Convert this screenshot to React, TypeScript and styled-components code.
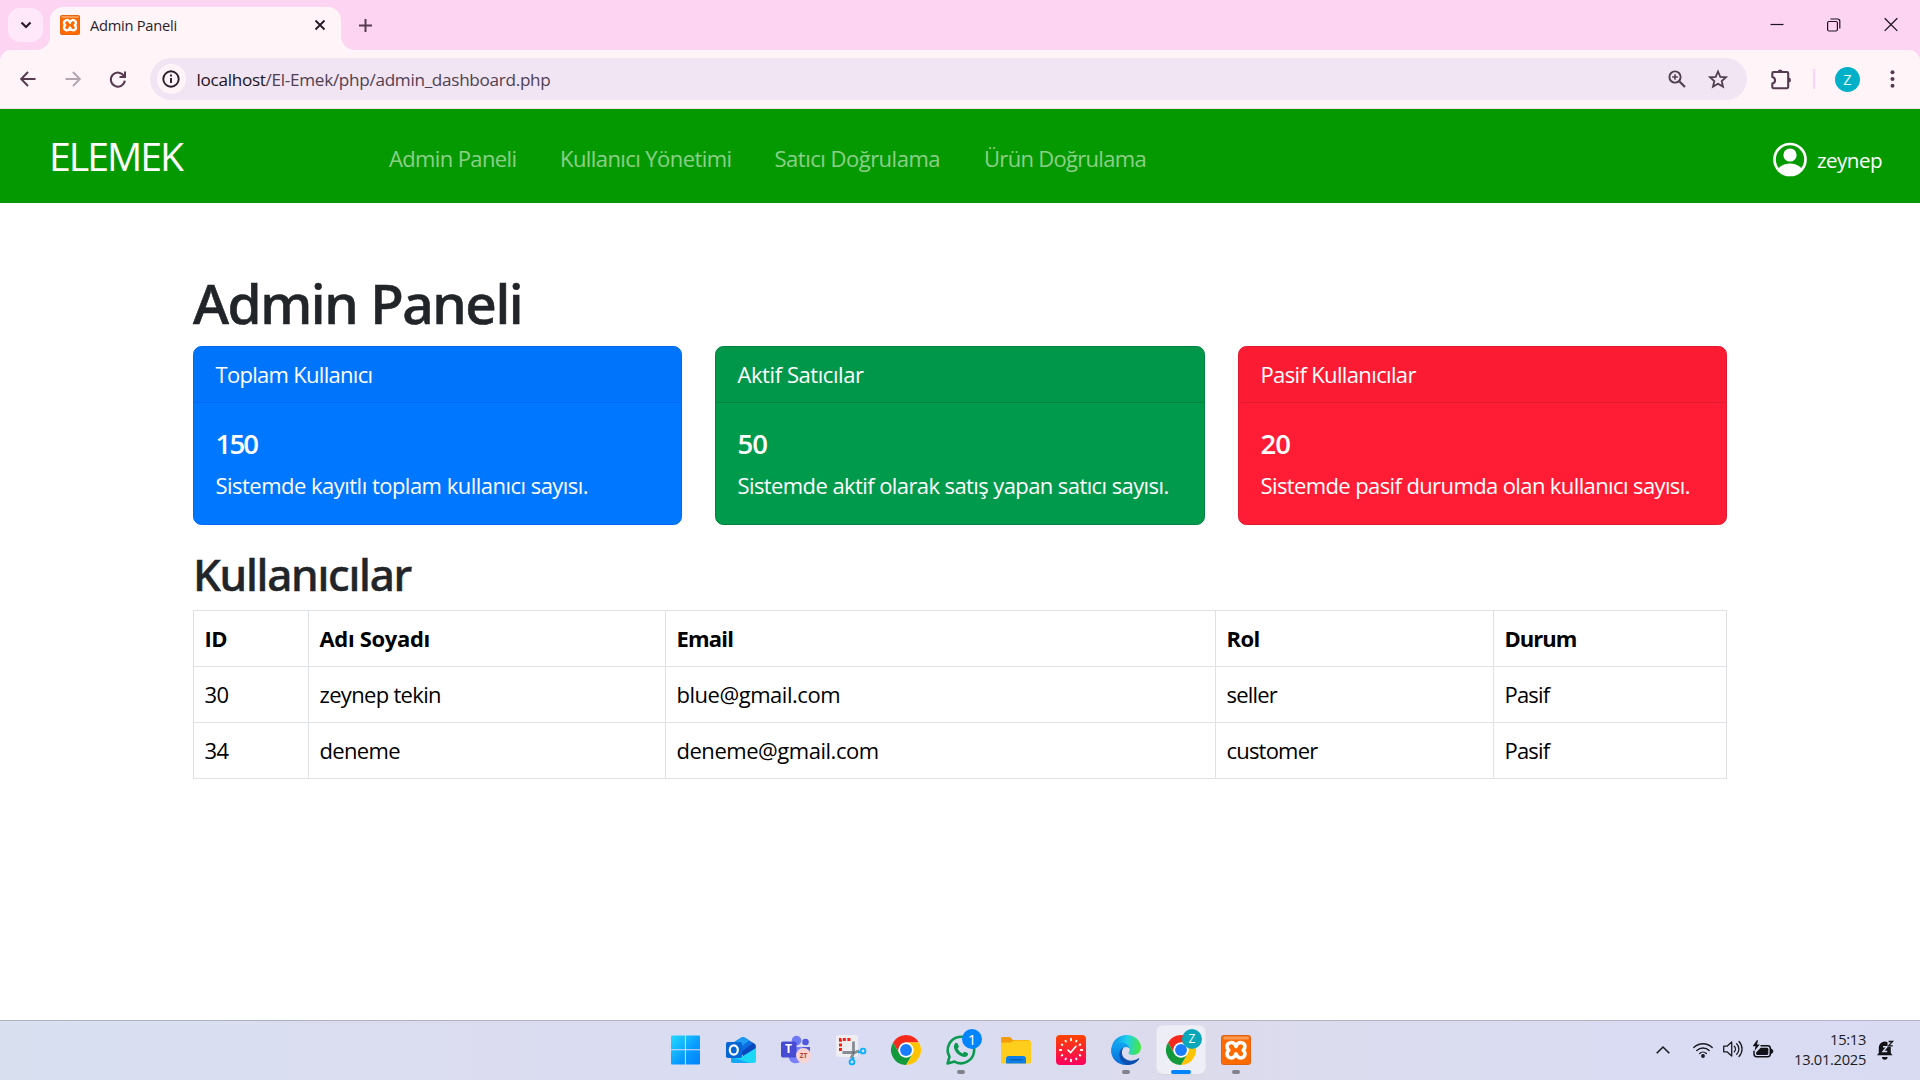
import React from "react";
import styled, { createGlobalStyle } from "styled-components";

const GlobalStyle = createGlobalStyle`
  *, *::before, *::after { box-sizing: border-box; }
  html, body { margin: 0; padding: 0; }
  body { background: #fff; overflow: hidden; font-family: "Open Sans", "Noto Sans", sans-serif; }
  svg { display: block; flex: none; overflow: visible; }
  h1, h2, h5, p { margin: 0; }
`;

const Screen = styled.div`
  width: 1920px;
  height: 1080px;
  display: flex;
  flex-direction: column;
  overflow: hidden;
`;

/* ---------- Browser chrome ---------- */

const TabStrip = styled.div`
  height: 50px;
  flex: none;
  display: flex;
  align-items: center;
  background: #fdd4f2;
  padding-left: 8px;
`;

const TabSearch = styled.div`
  width: 35px;
  height: 34px;
  border-radius: 12px;
  background: #fee8fa;
  display: flex;
  align-items: center;
  justify-content: center;
`;

const Tab = styled.div`
  position: relative;
  align-self: flex-end;
  width: 291px;
  height: 43px;
  margin-left: 7px;
  padding: 0 16px 7px 10px;
  border-radius: 13px 13px 0 0;
  background: #fff5f9;
  display: flex;
  align-items: center;
  &::before,
  &::after {
    content: "";
    position: absolute;
    bottom: 0;
    width: 13px;
    height: 13px;
  }
  &::before {
    left: -13px;
    background: radial-gradient(circle at 0 0, transparent 12.5px, #fff5f9 13px);
  }
  &::after {
    right: -13px;
    background: radial-gradient(circle at 100% 0, transparent 12.5px, #fff5f9 13px);
  }
`;

const TabTitle = styled.span`
  flex: 1;
  margin-left: 10px;
  font-size: 14.7px;
  letter-spacing: -0.27px;
  color: #2b1d29;
`;

const NewTab = styled.div`
  margin-left: 18px;
`;

const WindowButtons = styled.div`
  display: flex;
  align-items: center;
  gap: 43px;
  margin-left: auto;
  padding-right: 22px;
`;

const ToolbarBack = styled.div`
  flex: none;
  background: #fdd4f2;
`;

const Toolbar = styled.div`
  height: 59px;
  display: flex;
  align-items: center;
  background: #fff5f9;
  border-bottom: 1px solid #efdfee;
  border-radius: 11px 11px 0 0;
  padding: 0 20px;
`;

const NavButtons = styled.div`
  display: flex;
  align-items: center;
  gap: 29px;
  width: 130px;
`;

const Omnibox = styled.div`
  width: 1597px;
  height: 42px;
  border-radius: 21px;
  background: #f1e4f3;
  display: flex;
  align-items: center;
  padding: 0 19px 0 6.5px;
`;

const SiteInfo = styled.div`
  width: 29px;
  height: 30px;
  border-radius: 50%;
  background: #fff5f9;
  display: flex;
  align-items: center;
  justify-content: center;
`;

const Url = styled.span`
  flex: 1;
  margin-left: 11px;
  font-size: 17.15px;
  letter-spacing: -0.3px;
  color: #4f3f50;
`;

const Host = styled.span`
  color: #1d1320;
`;

const OmniActions = styled.div`
  display: flex;
  align-items: center;
  gap: 22px;
`;

const ToolbarActions = styled.div`
  display: flex;
  align-items: center;
  margin-left: 24px;
`;

const Divider = styled.div`
  width: 2px;
  height: 20px;
  margin: 0 20px 0 21px;
  background: #fcd3f6;
`;

const ProfileBadge = styled.div`
  width: 25px;
  height: 25px;
  margin-right: 30px;
  border-radius: 50%;
  background: #00b0c8;
  color: #e9fbff;
  font-size: 14.5px;
  line-height: 25px;
  text-align: center;
`;

/* ---------- Page ---------- */

const Page = styled.div`
  flex: 1;
  min-height: 0;
  background: #fff;
`;

const Navbar = styled.nav`
  height: 94px;
  display: flex;
  align-items: center;
  background: #059900;
  padding: 0 38px 0 49px;
`;

const Brand = styled.div`
  width: 340px;
  padding-bottom: 1px;
  font-size: 39.2px;
  letter-spacing: -2px;
  color: #fff;
`;

const NavList = styled.div`
  flex: 1;
  display: flex;
  padding-top: 3px;
`;

const NavLink = styled.a<{ $width: number; $track: number }>`
  width: ${(p) => p.$width}px;
  font-size: 22px;
  letter-spacing: ${(p) => p.$track}px;
  white-space: nowrap;
  color: rgba(255, 255, 255, 0.55);
`;

const UserMenu = styled.div`
  display: flex;
  align-items: center;
  gap: 10px;
  padding-top: 7px;
  font-size: 20.6px;
  letter-spacing: -0.55px;
  color: #fff;
`;

const Main = styled.main`
  width: 1534px;
  margin: 0 auto;
  padding-top: 66px;
`;

const PageTitle = styled.h1`
  font: 500 55px/67px "Noto Sans", sans-serif;
  letter-spacing: -1.45px;
  -webkit-text-stroke: 0.6px #212529;
  color: #212529;
  margin-bottom: 10px;
`;

const CardRow = styled.div`
  display: grid;
  grid-template-columns: 489px 490px 489px;
  justify-content: space-between;
`;

const Card = styled.section<{ $bg: string; $line: string }>`
  height: 179px;
  border: 1px solid ${(p) => p.$line};
  border-radius: 8.4px;
  background: ${(p) => p.$bg};
  color: #fff;
  overflow: hidden;
  --line: ${(p) => p.$line};
`;

const CardHeader = styled.div<{ $track: number }>`
  padding: 11px 22px 11px 21.5px;
  border-bottom: 1px solid var(--line);
  background: rgba(0, 0, 0, 0.015);
  font-size: 22px;
  line-height: 33px;
  letter-spacing: ${(p) => p.$track}px;
`;

const CardBody = styled.div`
  padding: 22px 22px 22px 21.5px;
`;

const CardFigure = styled.h5<{ $track: number }>`
  font-size: 27.5px;
  font-weight: 600;
  line-height: 35px;
  letter-spacing: ${(p) => p.$track}px;
  padding-top: 0.5px;
  margin-bottom: 8.5px;
`;

const CardText = styled.p<{ $track: number }>`
  font-size: 22px;
  line-height: 33px;
  letter-spacing: ${(p) => p.$track}px;
  white-space: nowrap;
`;

const SectionTitle = styled.h2`
  font: 500 44px/54px "Noto Sans", sans-serif;
  letter-spacing: -1.25px;
  -webkit-text-stroke: 0.5px #212529;
  color: #212529;
  margin: 22px 0 9px;
`;

const Table = styled.table`
  width: 1533px;
  table-layout: fixed;
  border-collapse: collapse;
  font-size: 22px;
  line-height: 33px;
  color: #000;
`;

const Col = styled.col<{ $width: number }>`
  width: ${(p) => p.$width}px;
`;

const Row = styled.tr`
  height: 56px;
`;

const HeadCell = styled.th<{ $track: number }>`
  border: 1px solid #dee2e6;
  padding: 11px 11px 11px 10.5px;
  text-align: left;
  font-weight: 700;
  letter-spacing: ${(p) => p.$track}px;
`;

const Cell = styled.td<{ $track: number }>`
  border: 1px solid #dee2e6;
  padding: 11px 11px 11px 10.5px;
  letter-spacing: ${(p) => p.$track}px;
`;

/* ---------- Taskbar ---------- */

const Taskbar = styled.footer`
  height: 60px;
  flex: none;
  display: grid;
  grid-template-columns: 1fr auto 1fr;
  border-top: 1px solid #b1b2c1;
  background: linear-gradient(90deg, #d8e0f0 0%, #dbdcf0 25%, #d9dcf3 45%, #dcdbec 62%, #d9dcf2 85%, #d8dbf1 100%);
`;

const AppList = styled.div`
  grid-column: 2;
  display: flex;
  align-items: center;
  margin-left: 2px;
`;

const AppSlot = styled.div`
  width: 55px;
  display: flex;
  justify-content: center;
`;

const AppTile = styled.div<{ $active?: boolean }>`
  position: relative;
  width: 48px;
  height: 48px;
  margin-bottom: 1px;
  border-radius: 6px;
  display: flex;
  align-items: center;
  justify-content: center;
  background: ${(p) => (p.$active ? "#eeeef6" : "transparent")};
  box-shadow: ${(p) => (p.$active ? "0 0 0 1px rgba(255,255,255,.35), 0 1px 1px rgba(0,0,0,.12)" : "none")};
`;

const Indicator = styled.div<{ $active?: boolean }>`
  position: absolute;
  bottom: 0;
  left: ${(p) => (p.$active ? 14 : 20)}px;
  width: ${(p) => (p.$active ? 20 : 8)}px;
  height: 4px;
  border-radius: 2px;
  background: ${(p) => (p.$active ? "#0085ff" : "#82828c")};
`;

const Badge = styled.div<{ $bg: string; $size: number }>`
  position: absolute;
  top: 3px;
  right: 3px;
  width: 20px;
  height: 20px;
  border-radius: 50%;
  background: ${(p) => p.$bg};
  color: #fff;
  font-size: ${(p) => p.$size}px;
  line-height: 20px;
  text-align: center;
`;

const Tray = styled.div`
  grid-column: 3;
  justify-self: end;
  display: flex;
  align-items: center;
  padding-right: 25px;
`;

const TrayIcons = styled.div`
  display: flex;
  align-items: center;
  gap: 10px;
  margin: 0 0 3px 23px;
`;

const Clock = styled.div`
  width: 93px;
  margin: 0 10px 4px 0;
  text-align: right;
  font-size: 14.7px;
  line-height: 20px;
  letter-spacing: -0.3px;
  color: #1b1b22;
`;

/* ---------- Icons ---------- */

const ink = "#553a50";

const XamppIcon = ({ size = 30 }: { size?: number }) => (
  <svg width={size} height={size} viewBox="0 0 30 30">
    <rect width="30" height="30" rx="3" fill="#e0640f" />
    <rect x="1" y="1" width="28" height="28" rx="2.5" fill="#ff6a00" />
    <rect x="2" y="1.5" width="26" height="3" rx="1.5" fill="#f99a55" />
    <path
      d="M15 11.5C13.8 7.6 11 6.900 8.700 7.900C5.500 9.200 5.200 12.600 7.800 15.200C5.200 17.800 5.500 21.400 8.700 22.600C11 23.500 13.800 22.600 15 18.900C16.200 22.600 19 23.500 21.300 22.600C24.500 21.400 24.800 17.800 22.200 15.200C24.800 12.600 24.500 9.200 21.300 7.900C19 6.900 16.200 7.600 15 11.500Z"
      fill="none"
      stroke="#fff"
      strokeWidth="3.6"
      strokeLinejoin="round"
    />
  </svg>
);

const ChromeIcon = () => (
  <svg width="30" height="30" viewBox="0 0 48 48">
    <circle cx="24" cy="24" r="24" fill="#fff" />
    <path d="M24 12H44.8A24 24 0 0 0 3.2 12L13.6 30A12 12 0 0 1 24 12Z" fill="#f52a1d" />
    <path d="M34.4 30L24 48A24 24 0 0 0 44.8 12H24A12 12 0 0 1 34.4 30Z" fill="#ffc400" />
    <path d="M13.6 30L3.2 12A24 24 0 0 0 24 48L34.4 30A12 12 0 0 1 13.6 30Z" fill="#12993c" />
    <circle cx="24" cy="24" r="12" fill="#fff" />
    <circle cx="24" cy="24" r="9.5" fill="#1a7dff" />
  </svg>
);

const WindowsIcon = () => (
  <svg width="30" height="30" viewBox="0 0 30 30">
    <defs>
      <linearGradient id="win" x1="0" y1="0" x2="30" y2="30" gradientUnits="userSpaceOnUse">
        <stop stopColor="#22dcff" />
        <stop offset=".6" stopColor="#0899ff" />
        <stop offset="1" stopColor="#0080f8" />
      </linearGradient>
    </defs>
    <path d="M1 .5H13.900V14.300H0V1.500a1 1 0 0 1 1-1ZM14.900.5H28a1 1 0 0 1 1 1V14.300H14.900ZM0 15.300H13.900V29.500H1a1 1 0 0 1-1-1ZM14.900 15.300H29V28.500a1 1 0 0 1-1 1H14.900Z" fill="url(#win)" />
  </svg>
);

const OutlookIcon = () => (
  <svg width="30" height="30" viewBox="0 0 30 30">
    <path d="M5 9L15.5 2.5a3 3 0 0 1 3 0L29 9v4L17 20H5Z" fill="#0f6be0" />
    <path d="M5 9L15.5 2.5a3 3 0 0 1 3 0l5 3L10 15H5Z" fill="#1e9bf5" />
    <path d="M16 16.500L27 8l2.800 2v5L17 22Z" fill="#0a49bd" />
    <path d="M30 13v12.500a2.500 2.500 0 0 1-2.500 2.500H7.500A2.500 2.500 0 0 1 5 25.500V22l12-1Z" fill="#1dd7f7" />
    <path d="M5 22L24 28H7.500A2.500 2.500 0 0 1 5 25.500Z" fill="#14a8f4" />
    <rect x="0" y="7" width="16" height="16" rx="1.800" fill="#0666d6" />
    <ellipse cx="7.800" cy="15" rx="4" ry="4.600" fill="none" stroke="#fff" strokeWidth="2.200" />
  </svg>
);

const TeamsLetter = styled.span`
  position: absolute;
  left: 9px;
  top: 15px;
  width: 15px;
  height: 16px;
  line-height: 16px;
  font-size: 12px;
  font-weight: 700;
  text-align: center;
  color: #fff;
`;

const TeamsAccount = styled.span`
  position: absolute;
  left: 24px;
  top: 22px;
  width: 15px;
  height: 15px;
  border-radius: 50%;
  background: #f9d3cf;
  line-height: 15px;
  font-size: 6.5px;
  font-weight: 700;
  text-align: center;
  color: #a5473d;
`;

const TeamsIcon = () => (
  <>
    <svg width="30" height="30" viewBox="0 0 30 30">
      <circle cx="15.500" cy="5.600" r="4.800" fill="#7079f5" />
      <circle cx="24.500" cy="7" r="3.300" fill="#5059e0" />
      <path d="M19 12h10v9a6 6 0 0 1-10 4Z" fill="#5158df" />
      <path d="M8 12h13.500v10.500a7 7 0 0 1-13.500 1Z" fill="#7880fb" />
      <rect y="6.500" width="15.500" height="16" rx="1.800" fill="#454bd3" />
    </svg>
    <TeamsLetter>T</TeamsLetter>
    <TeamsAccount>ZT</TeamsAccount>
  </>
);

const SnipIcon = () => (
  <svg width="30" height="30" viewBox="0 0 30 30">
    <rect y="0" width="22" height="22" rx="2" fill="#eeeef0" />
    <path d="M4.500 16V4.500H16" fill="none" stroke="#f51f14" strokeWidth="3" strokeDasharray="3 1.600" />
    <path d="M17.500 6.500V18.500L15 23.500M6.500 17.500H18.500L23 15.800" fill="none" stroke="#868c94" strokeWidth="2.800" />
    <circle cx="17.500" cy="17.500" r="1" fill="#555b62" />
    <circle cx="27" cy="16" r="2.400" fill="none" stroke="#0bb0fa" strokeWidth="1.900" />
    <circle cx="16" cy="27" r="2.400" fill="none" stroke="#0bb0fa" strokeWidth="1.900" />
    <path d="M22 17.400l3-.700M17.600 22l-.800 3" stroke="#0bb0fa" strokeWidth="2" />
  </svg>
);

const WhatsAppIcon = () => (
  <svg width="30" height="30" viewBox="0 0 30 30">
    <path d="M1.600 28.400L3.500 21.600A13.200 13.200 0 1 1 8.600 26.600Z" fill="none" stroke="#0b9a50" strokeWidth="2.600" strokeLinejoin="round" />
    <path d="M9.200 8.300c.700-.700 1.900-.700 2.300.1l1.300 2.800c.3.700-.900 1.700-1.200 2.300 1 2.300 2.800 4 5 4.900.700-.4 1.500-1.900 2.200-1.600l2.700 1.300c.9.500.5 2.100-.3 2.900-1.500 1.400-3.600 1.300-5.900.3-3.600-1.600-6.300-4.600-7.200-8-.5-2 0-3.900 1.100-5Z" fill="#0b9a50" />
  </svg>
);

const FolderIcon = () => (
  <svg width="30" height="30" viewBox="0 0 30 30">
    <path d="M0 3.500a1.500 1.500 0 0 1 1.500-1.500H9l3 3H28v5H0Z" fill="#f39b0c" />
    <path d="M0 7.500H9.500L13 5.500H28.500A1.500 1.500 0 0 1 30 7v20a1.500 1.500 0 0 1-1.500 1.500H1.500A1.500 1.500 0 0 1 0 27Z" fill="#ffcd1c" />
    <path d="M5 28.500V24a3 3 0 0 1 3-3H22a3 3 0 0 1 3 3v4.500Z" fill="#0b7fe8" />
    <path d="M8.500 24.800H21.500" stroke="#075bb5" strokeWidth="1.200" />
  </svg>
);

const RedClockIcon = () => (
  <svg width="30" height="30" viewBox="0 0 30 30">
    <defs>
      <linearGradient id="red" x1="0" y1="0" x2="0" y2="1">
        <stop stopColor="#ff4400" />
        <stop offset="1" stopColor="#fd005f" />
      </linearGradient>
    </defs>
    <rect width="30" height="30" rx="4" fill="url(#red)" />
    <g stroke="#fff" strokeWidth="1.900" strokeLinecap="round">
      <path d="M15 3.800v1.400M15 24.800v1.400M3.800 15h1.400M24.800 15h1.400M20.500 5.800l-.4.600M24.300 9.500l-.6.400M24.300 20.500l-.6-.4M20.500 24.200l-.4-.6M9.500 24.200l.4-.6M5.700 20.500l.6-.4M5.700 9.500l.6.400M9.500 5.800l.4.600" />
      <path d="M12 15.200l2.600 2.400L20 11.300" fill="none" strokeWidth="1.700" />
    </g>
  </svg>
);

const EdgeIcon = () => (
  <svg width="30" height="30" viewBox="0 0 30 30">
    <defs>
      <linearGradient id="edgeTop" x1="0" y1=".4" x2="1" y2=".5">
        <stop stopColor="#0a8df0" />
        <stop offset=".5" stopColor="#1ed0ea" />
        <stop offset="1" stopColor="#48e83e" />
      </linearGradient>
      <linearGradient id="edgeLeft" x1="0" y1="0" x2="0" y2="1">
        <stop stopColor="#12a5f2" />
        <stop offset="1" stopColor="#0769d8" />
      </linearGradient>
    </defs>
    <path d="M.5 13C1.800 5 8 0 15.500 0C24 0 30 6 30 12.500C30 17 26.500 20 22.500 20C19.500 20 17.500 19.200 17.500 18C17.500 17.300 18.600 16.500 18.600 14.500C18.600 11 15 8 10 8C5.500 8 2 10 .5 13Z" fill="url(#edgeTop)" />
    <path d="M.1 14C1 10 5 7.600 9.800 7.600C14.800 7.600 18.200 10.300 18.600 13.800C17.800 12.800 16.500 12 15 12C12 12 9.500 15 9.500 19C9.500 24 13 28.500 18 29.700C8.500 31.500-.8 24.500.1 14Z" fill="url(#edgeLeft)" />
    <path d="M12.800 12.600C10.500 15 9.800 20 13.500 23.300C17.500 26.800 23 26 27 23.500C27.800 23 28.600 23.800 28 24.600C25 28.500 20.500 30.500 16.500 29.900C11 28.500 8 23.500 8.300 19C8.500 16 10 13.600 12.800 12.600Z" fill="#0b4fb0" />
  </svg>
);

const RestoreIcon = () => (
  <svg width="14" height="14" viewBox="0 0 14 14" fill="none" stroke="#1c1420">
    <rect x=".6" y="3.500" width="9.800" height="9.500" rx="1.500" strokeWidth="1.200" />
    <path d="M3.400 1H10.600a2.200 2.200 0 0 1 2.200 2.200V10.500" strokeWidth="1.200" />
  </svg>
);

const apps: { icon: React.ReactNode; running?: boolean; active?: boolean; badge?: React.ReactNode }[] = [
  { icon: <WindowsIcon /> },
  { icon: <OutlookIcon /> },
  { icon: <TeamsIcon /> },
  { icon: <SnipIcon /> },
  { icon: <ChromeIcon /> },
  { icon: <WhatsAppIcon />, running: true, badge: <Badge $bg="#0085ff" $size={15}>1</Badge> },
  { icon: <FolderIcon /> },
  { icon: <RedClockIcon /> },
  { icon: <EdgeIcon />, running: true },
  { icon: <ChromeIcon />, running: true, active: true, badge: <Badge $bg="#0aa7ba" $size={12}>Z</Badge> },
  { icon: <XamppIcon />, running: true },
];

const links = [
  { text: "Admin Paneli", width: 171, track: -0.63 },
  { text: "Kullanıcı Yönetimi", width: 214.5, track: -0.58 },
  { text: "Satıcı Doğrulama", width: 209.5, track: -0.5 },
  { text: "Ürün Doğrulama", width: 170, track: -0.7 },
];

const cards = [
  { title: "Toplam Kullanıcı", count: "150", text: "Sistemde kayıtlı toplam kullanıcı sayısı.", bg: "#0077ff", line: "#0068f5", head: -0.7, figure: -1.8, body: -0.52 },
  { title: "Aktif Satıcılar", count: "50", text: "Sistemde aktif olarak satış yapan satıcı sayısı.", bg: "#009a4d", line: "#008140", head: -0.43, figure: -0.9, body: -0.59 },
  { title: "Pasif Kullanıcılar", count: "20", text: "Sistemde pasif durumda olan kullanıcı sayısı.", bg: "#ff1c34", line: "#e01a30", head: -0.64, figure: -0.9, body: -0.61 },
];

const columns = [
  { name: "ID", width: 115, head: -0.6, cell: -0.55 },
  { name: "Adı Soyadı", width: 357, head: -0.33, cell: -0.68 },
  { name: "Email", width: 550, head: -0.8, cell: -0.47 },
  { name: "Rol", width: 278, head: -0.6, cell: -0.8 },
  { name: "Durum", width: 233, head: -1, cell: -0.8 },
];

const users = [
  ["30", "zeynep tekin", "blue@gmail.com", "seller", "Pasif"],
  ["34", "deneme", "deneme@gmail.com", "customer", "Pasif"],
];

const BrowserTabs = () => (
  <TabStrip>
    <TabSearch>
      <svg width="12" height="8" viewBox="0 0 12 8" fill="none" stroke="#2a1a28" strokeWidth="2.200">
        <path d="M1.500 1.500L6 6l4.500-4.500" />
      </svg>
    </TabSearch>
    <Tab>
      <XamppIcon size={20} />
      <TabTitle>Admin Paneli</TabTitle>
      <svg width="10" height="10" viewBox="0 0 10 10" stroke="#2a1a28" strokeWidth="1.900">
        <path d="M.5.5l9 9M9.500.5l-9 9" />
      </svg>
    </Tab>
    <NewTab>
      <svg width="13" height="13" viewBox="0 0 13 13" stroke={ink} strokeWidth="2">
        <path d="M6.500 0v13M0 6.500h13" />
      </svg>
    </NewTab>
    <WindowButtons>
      <svg width="14" height="14" viewBox="0 0 14 14" stroke="#1c1420" strokeWidth="1.200">
        <path d="M.5 6.500h13" />
      </svg>
      <RestoreIcon />
      <svg width="14" height="14" viewBox="0 0 14 14" stroke="#1c1420" strokeWidth="1.300">
        <path d="M.700.300l12.600 12.600M13.300.300L.700 12.900" />
      </svg>
    </WindowButtons>
  </TabStrip>
);

const BrowserToolbar = () => (
  <ToolbarBack>
    <Toolbar>
      <NavButtons>
        <svg width="16" height="16" viewBox="0 0 16 16" fill="none" stroke={ink} strokeWidth="2">
          <path d="M15.500 8H1.500M8 1L1.200 8L8 15" />
        </svg>
        <svg width="16" height="16" viewBox="0 0 16 16" fill="none" stroke="#b5a5b1" strokeWidth="2">
          <path d="M.5 8h14M8 1l6.800 7L8 15" />
        </svg>
        <svg width="16" height="16" viewBox="0 0 16 16" fill="none" stroke={ink} strokeWidth="2">
          <path d="M14 5.200A7 7 0 1 0 14.800 9.600" />
          <path d="M15 .5V6H9.500" />
        </svg>
      </NavButtons>
      <Omnibox>
        <SiteInfo>
          <svg width="18" height="18" viewBox="0 0 18 18" fill="none" stroke="#2a1e2b" strokeWidth="1.900">
            <circle cx="9" cy="9" r="7.700" />
            <path d="M9 8v5M9 4.600v1.900" />
          </svg>
        </SiteInfo>
        <Url>
          <Host>localhost</Host>/El-Emek/php/admin_dashboard.php
        </Url>
        <OmniActions>
          <svg width="18" height="18" viewBox="0 0 18 18" fill="none" stroke="#50404f" strokeWidth="1.900">
            <circle cx="7" cy="7" r="5.600" />
            <path d="M11 11l6 6" strokeWidth="2.200" />
            <path d="M7 4.200v5.600M4.200 7h5.600" strokeWidth="1.500" />
          </svg>
          <svg width="20" height="20" viewBox="0 0 20 20" fill="none" stroke="#50404f" strokeWidth="1.800">
            <path d="M10 2.500l2.300 5.300 5.700.500-4.300 3.700 1.300 5.600L10 14.700l-5 2.900 1.300-5.600L2 8.300l5.700-.500Z" />
          </svg>
        </OmniActions>
      </Omnibox>
      <ToolbarActions>
        <svg width="21" height="21" viewBox="0 0 21 21">
          <path d="M2.500 3H16a1.200 1.200 0 0 1 1.200 1.200V18a1.200 1.200 0 0 1-1.200 1.200H2.500A1.200 1.200 0 0 1 1.300 18V14.500A3.300 3.300 0 0 0 1.300 8V4.200A1.200 1.200 0 0 1 2.500 3Z" fill="none" stroke={ink} strokeWidth="2.100" strokeLinejoin="round" />
          <path d="M6.700 3a2.500 2.500 0 0 1 5 0ZM17.500 8.600a2.500 2.500 0 0 1 0 5Z" fill={ink} />
        </svg>
        <Divider />
        <ProfileBadge>Z</ProfileBadge>
        <svg width="5" height="18" viewBox="0 0 5 18" fill={ink}>
          <circle cx="2.500" cy="2.200" r="2" />
          <circle cx="2.500" cy="9" r="2" />
          <circle cx="2.500" cy="15.800" r="2" />
        </svg>
      </ToolbarActions>
    </Toolbar>
  </ToolbarBack>
);

const UserIcon = () => (
  <svg width="34" height="34" viewBox="0 .5 34 34">
    <defs>
      <clipPath id="userClip">
        <circle cx="17" cy="17" r="15.500" />
      </clipPath>
    </defs>
    <circle cx="17" cy="17" r="15.500" fill="none" stroke="#fff" strokeWidth="2.700" />
    <circle cx="17" cy="12.500" r="6.600" fill="#fff" />
    <ellipse cx="17" cy="31.500" rx="13.500" ry="10.500" fill="#fff" clipPath="url(#userClip)" />
  </svg>
);

const SystemTray = () => (
  <Tray>
    <svg width="14" height="9" viewBox="0 0 14 9" fill="none" stroke="#1b1b22" strokeWidth="1.600">
      <path d="M.7 7.200L7 1l6.300 6.200" />
    </svg>
    <TrayIcons>
      <svg width="20" height="17" viewBox="0 0 20 17" fill="none" stroke="#1b1b22" strokeWidth="1.400" strokeLinecap="round">
        <path d="M.800 6.500a13 13 0 0 1 18.400 0M3.800 9.600a8.800 8.800 0 0 1 12.400 0M6.700 12.500a4.700 4.700 0 0 1 6.600 0" />
        <circle cx="10" cy="15" r="1.200" fill="#1b1b22" />
      </svg>
      <svg width="20" height="18" viewBox="0 0 20 18" fill="none" stroke="#1b1b22" strokeWidth="1.300" strokeLinecap="round" strokeLinejoin="round">
        <path d="M.700 6.200h3.300L8.700 2v14L4 11.800H.700Z" />
        <path d="M11.300 6.200a4 4 0 0 1 0 5.600M13.700 3.800a7.300 7.300 0 0 1 0 10.400M16 1.500a10.700 10.700 0 0 1 0 15" />
      </svg>
      <svg width="20" height="17" viewBox="0 0 20 17">
        <path d="M7.500 4.800H14.700a2.600 2.600 0 0 1 2.600 2.600v5.700a2.600 2.600 0 0 1-2.600 2.600H3.600A2.600 2.600 0 0 1 1 13.100V9.800" fill="none" stroke="#111116" strokeWidth="1.500" />
        <path d="M7.700 6.700H14a1.300 1.300 0 0 1 1.300 1.300v4.600a1.300 1.300 0 0 1-1.300 1.300H4.300A1.300 1.300 0 0 1 3 12.600V11.500Z" fill="#111116" />
        <path d="M18 8v4.500a2.300 2.300 0 0 0 0-4.500Z" fill="#111116" stroke="#111116" />
        <path d="M3.800-.8L-.3 5.300H2.500L1.600 9.800L6.800 3.400H4L5 -.8Z" fill="#111116" />
      </svg>
    </TrayIcons>
    <Clock>
      15:13
      <br />
      13.01.2025
    </Clock>
    <svg width="19" height="21" viewBox="0 0 19 21">
      <path d="M2.800 13V7.500A6 6 0 0 1 14.800 7.500V13l1.700 2.300H1L2.800 13Z" fill="#111116" />
      <path d="M6 17h5.600a2.800 2.800 0 0 1-5.600 0Z" fill="#111116" />
      <path d="M7 6.800h4L7 11.500h4.200" fill="none" stroke="#dadcf1" strokeWidth="1.400" />
      <path d="M11.500.2h6v6.600h-6Z" fill="#dadcf1" />
      <path d="M12.600 1.500h4l-4 4.400h4.200" fill="none" stroke="#111116" strokeWidth="1.300" />
    </svg>
  </Tray>
);

export default function App() {
  return (
    <Screen>
      <GlobalStyle />
      <BrowserTabs />
      <BrowserToolbar />
      <Page>
        <Navbar>
          <Brand>ELEMEK</Brand>
          <NavList>
            {links.map((l) => (
              <NavLink key={l.text} $width={l.width} $track={l.track}>
                {l.text}
              </NavLink>
            ))}
          </NavList>
          <UserMenu>
            <UserIcon />
            zeynep
          </UserMenu>
        </Navbar>
        <Main>
          <PageTitle>Admin Paneli</PageTitle>
          <CardRow>
            {cards.map((c) => (
              <Card key={c.title} $bg={c.bg} $line={c.line}>
                <CardHeader $track={c.head}>{c.title}</CardHeader>
                <CardBody>
                  <CardFigure $track={c.figure}>{c.count}</CardFigure>
                  <CardText $track={c.body}>{c.text}</CardText>
                </CardBody>
              </Card>
            ))}
          </CardRow>
          <SectionTitle>Kullanıcılar</SectionTitle>
          <Table>
            <colgroup>
              {columns.map((c) => (
                <Col key={c.name} $width={c.width} />
              ))}
            </colgroup>
            <thead>
              <Row>
                {columns.map((c) => (
                  <HeadCell key={c.name} $track={c.head}>
                    {c.name}
                  </HeadCell>
                ))}
              </Row>
            </thead>
            <tbody>
              {users.map((u) => (
                <Row key={u[0]}>
                  {u.map((v, i) => (
                    <Cell key={i} $track={columns[i].cell}>
                      {v}
                    </Cell>
                  ))}
                </Row>
              ))}
            </tbody>
          </Table>
        </Main>
      </Page>
      <Taskbar>
        <AppList>
          {apps.map((a, i) => (
            <AppSlot key={i}>
              <AppTile $active={a.active}>
                {a.icon}
                {a.badge}
                {a.running && <Indicator $active={a.active} />}
              </AppTile>
            </AppSlot>
          ))}
        </AppList>
        <SystemTray />
      </Taskbar>
    </Screen>
  );
}
